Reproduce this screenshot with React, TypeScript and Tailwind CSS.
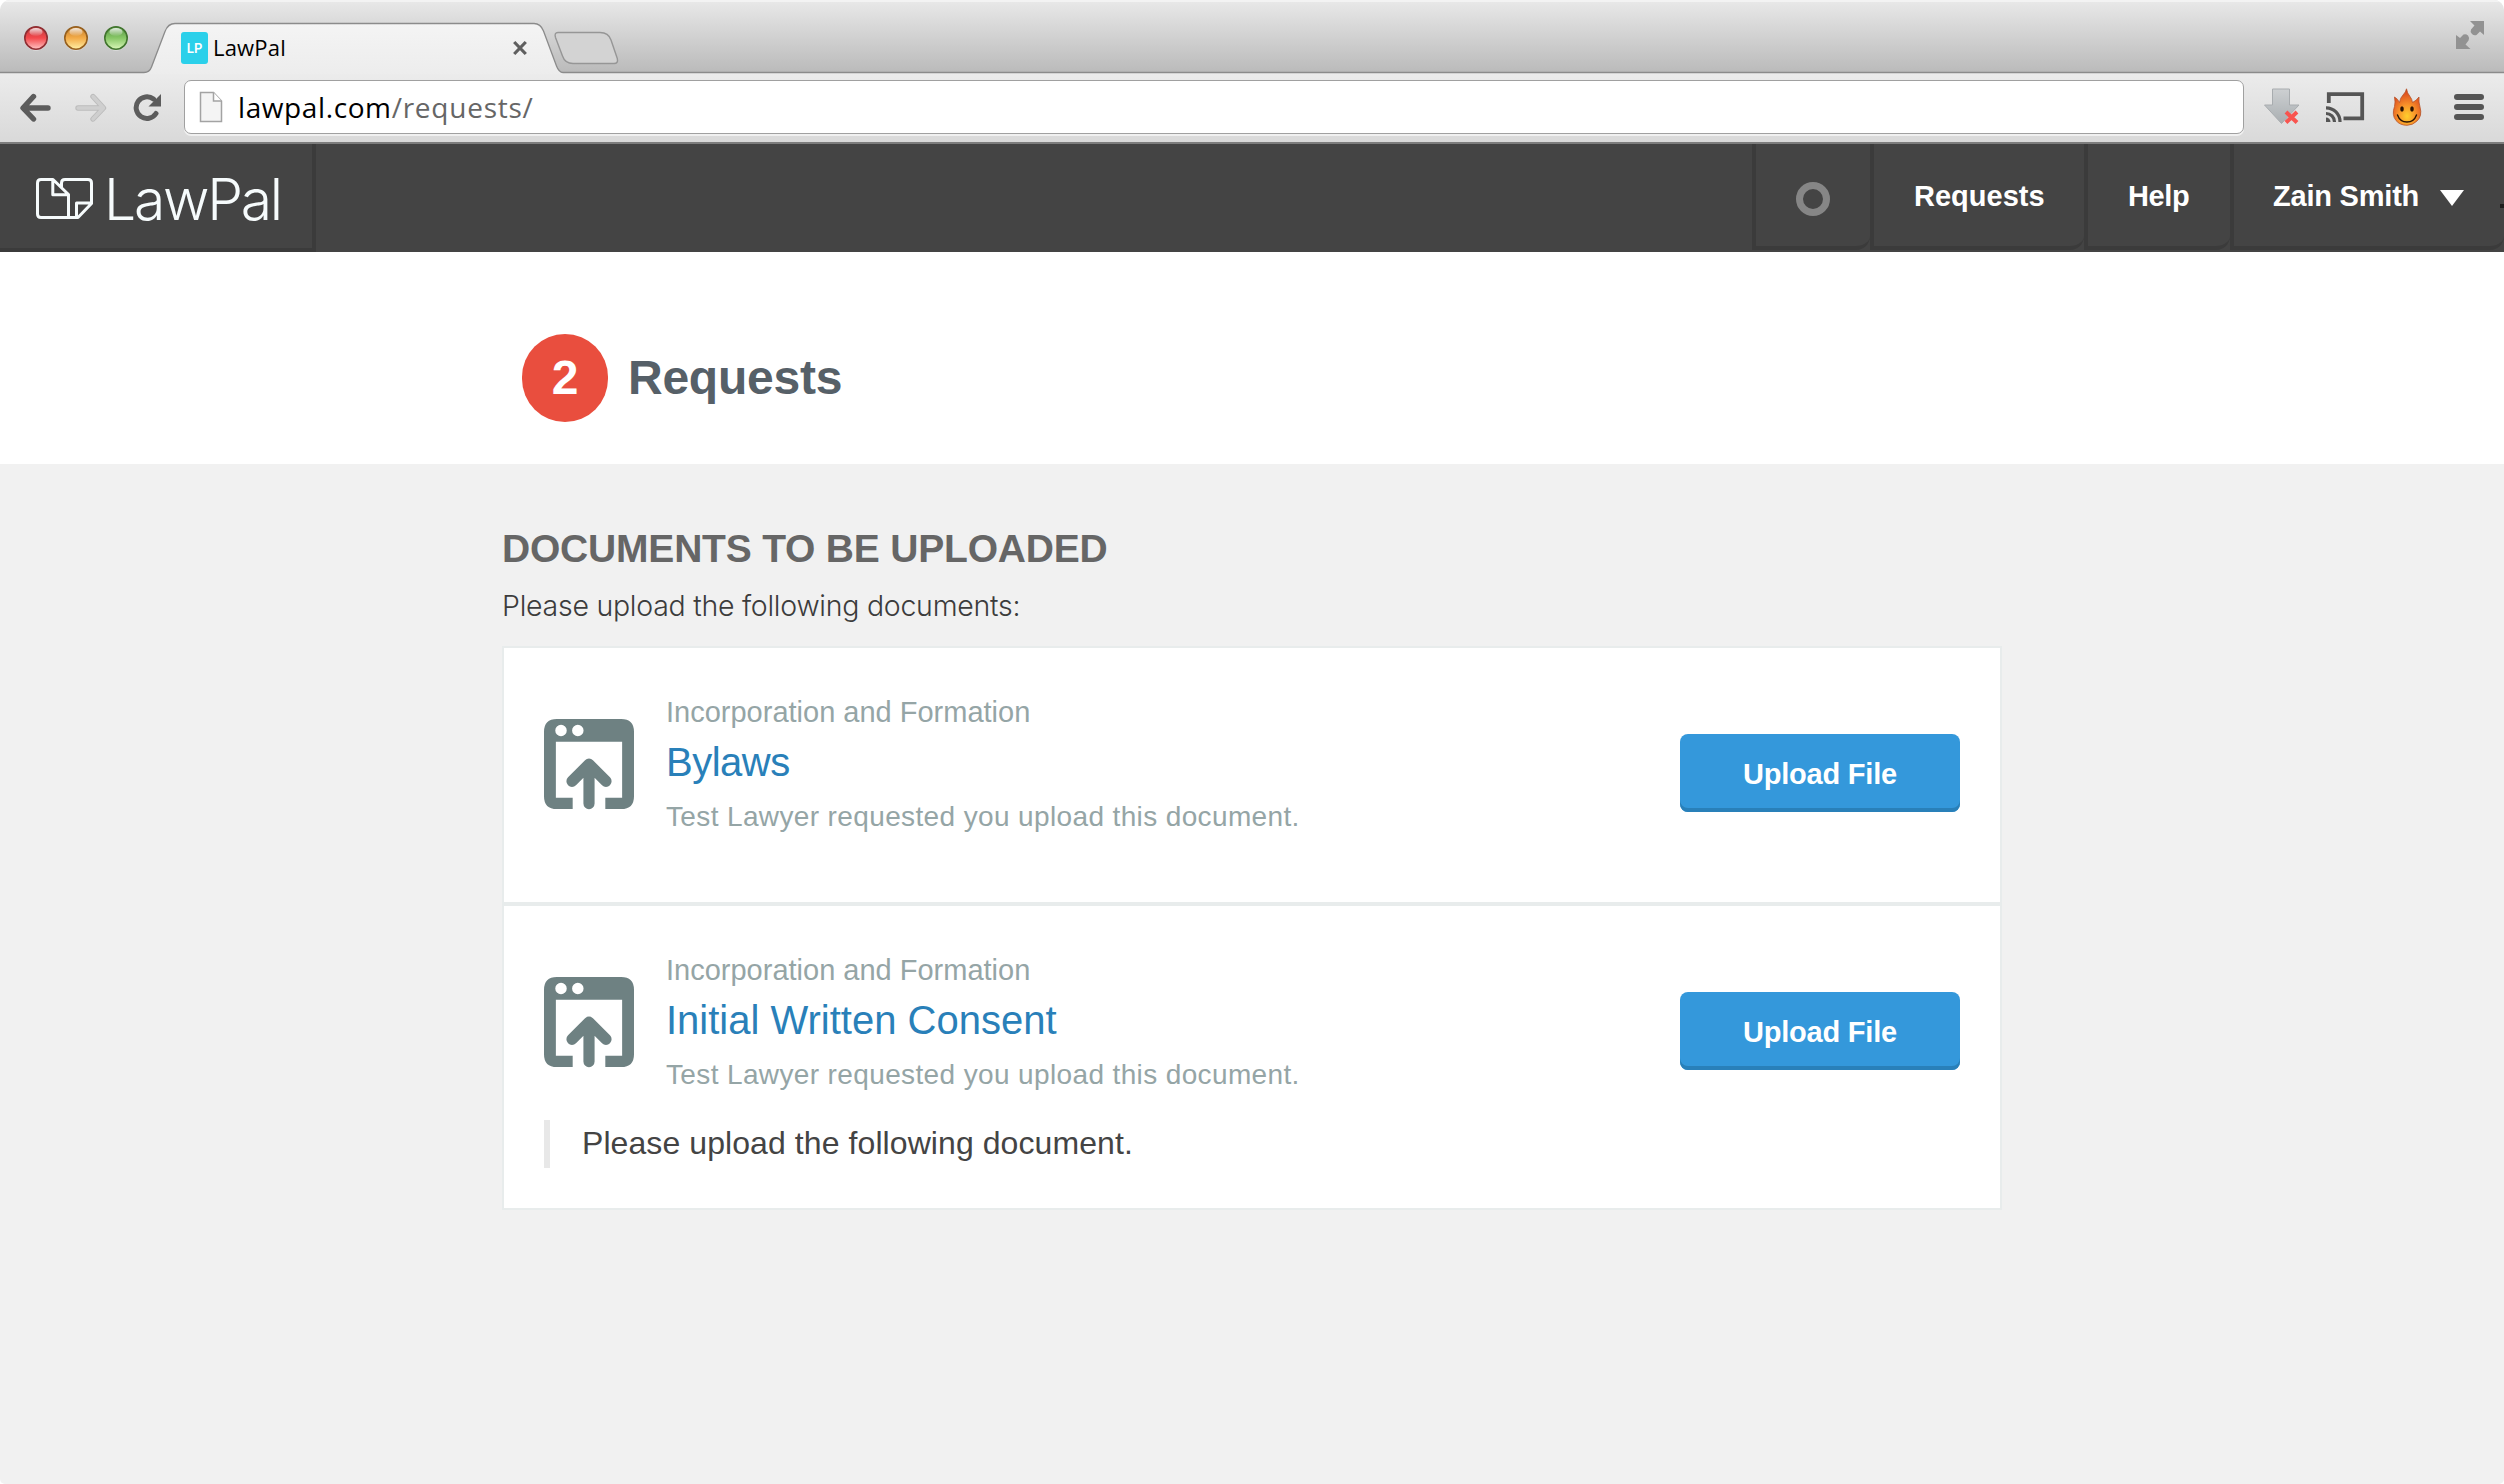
import React from 'react';

function TrafficLight({ id, edge, top, mid, glow }: { id: string; edge: string; top: string; mid: string; glow: string }) {
  return (
    <svg className="h-[26px] w-[26px]" viewBox="0 0 26 26">
      <defs>
        <linearGradient id={id} x1="0" y1="0" x2="0" y2="1">
          <stop offset="0" stopColor={top} />
          <stop offset="0.5" stopColor={mid} />
          <stop offset="1" stopColor={glow} />
        </linearGradient>
        <linearGradient id={id + '-shine'} x1="0" y1="0" x2="0" y2="1">
          <stop offset="0" stopColor="#fff" stopOpacity="0.85" />
          <stop offset="1" stopColor="#fff" stopOpacity="0.05" />
        </linearGradient>
      </defs>
      <circle cx="13" cy="14" r="11.8" fill="#fff" opacity="0.45" />
      <circle cx="13" cy="13" r="11.2" fill={`url(#${id})`} stroke={edge} strokeWidth="1.6" />
      <ellipse cx="13" cy="7" rx="6.6" ry="4" fill={`url(#${id}-shine)`} />
    </svg>
  );
}

function TabStrip() {
  return (
    <div className="relative flex h-[73px] items-start bg-linear-to-b from-[#e9e9e9] to-[#bababa] shadow-[inset_0_2px_0_#f3f3f3]">
      <svg className="absolute top-0 left-0 h-[74px] w-[2504px]" viewBox="0 0 2504 74">
        <defs>
          <linearGradient id="tab" x1="0" y1="0" x2="0" y2="1">
            <stop offset="0" stopColor="#f4f4f4" />
            <stop offset="1" stopColor="#ececec" />
          </linearGradient>
        </defs>
        <path
          d="M-2 78V72.500H144Q149.500 72.500 151.500 67L165 31.500Q168 23.500 175 23.500H534Q540.500 23.500 543.500 31L556.500 66Q559 72.500 563 72.500H2506V78Z"
          fill="url(#tab)"
          stroke="#8b8b8b"
          strokeWidth="1.3"
        />
        <path
          d="M558 32.500H600Q608.500 32.500 611 40L617.300 58.500Q618.500 63.500 614 63.500H573Q565 63.500 562.500 56L555.500 37.500Q554 32.500 558 32.500Z"
          fill="#d3d3d3"
          stroke="#969696"
          strokeWidth="1.4"
        />
      </svg>
      <div className="relative flex w-[181px] gap-[14px] pt-[25px] pl-[23px]">
        <TrafficLight id="close" edge="#8f2f33" top="#b9373b" mid="#f4494c" glow="#ffc3c3" />
        <TrafficLight id="minimize" edge="#96601f" top="#c07a2a" mid="#f3ab47" glow="#fff0a5" />
        <TrafficLight id="zoom" edge="#42752f" top="#549342" mid="#87c766" glow="#d9f7b8" />
      </div>
      <div className="relative flex w-[347px] items-start">
        <div className="mt-[32px] flex h-[32px] w-[27px] items-center justify-center rounded-[3px] bg-[#2bd0ea] pt-[1px] font-['Inter'] text-[13px] leading-none font-semibold text-white">
          LP
        </div>
        <div className="mt-[31px] ml-[5px] font-['Open_Sans',sans-serif] text-[22px] leading-[32px] tracking-[0.2px] text-black">LawPal</div>
        <svg className="mt-[40px] ml-auto h-[16px] w-[16px]" viewBox="0 0 16 16">
          <path d="M2.200 2L13.800 14M13.800 2L2.200 14" stroke="#5f5f5f" strokeWidth="3.2" />
        </svg>
      </div>
      <svg className="relative mt-[21px] mr-[20px] ml-auto h-[29px] w-[28px]" viewBox="0 0 28 29">
        <path
          d="M14 0H28V14L24 10.500L20.500 14Q18 15 16 13Q13.800 11 15 8.500L18.500 4.500Z M0 14L4 17L7.500 13.500Q10 12.500 12 14.500Q14 17 12.500 19.500L9.500 23.500L14.500 28H0Z"
          fill="#929292"
        />
      </svg>
    </div>
  );
}

function Toolbar() {
  return (
    <div className="flex h-[71px] items-start border-b-2 border-[#7d7d7d] bg-linear-to-b from-[#ececec] to-[#d9d9d9]">
      <div className="flex w-[184px] pt-[20px]">
        <svg className="ml-[20px] h-[30px] w-[32px]" viewBox="0 0 32 30">
          <path d="M13.500 3.500L3 15L13.500 26M3.500 15H28" fill="none" stroke="#5c5c5c" strokeWidth="5.4" strokeLinecap="round" strokeLinejoin="round" />
        </svg>
        <svg className="ml-[23px] h-[30px] w-[32px]" viewBox="0 0 32 30">
          <path d="M18 3.500L28.500 15L18 26M28 15H3" fill="none" stroke="#bcbcbc" strokeWidth="5.400" strokeLinecap="round" strokeLinejoin="round" />
          <path d="M18 3.500L28.500 15L18 26M28 15H3" fill="none" stroke="#cfcfcf" strokeWidth="3.400" strokeLinecap="round" strokeLinejoin="round" />
        </svg>
        <svg className="ml-[26px] h-[30px] w-[29px]" viewBox="0 0 29 30">
          <path d="M23 20.500A10.800 10.800 0 1 1 20.500 6" fill="none" stroke="#5c5c5c" strokeWidth="5" strokeLinecap="round" />
          <path d="M28 1V13.500H15.500Z" fill="#5c5c5c" />
        </svg>
      </div>
      <div className="mt-[7px] flex h-[54px] w-[2060px] rounded-[7px] border-[1.500px] border-[#a0a0a0] bg-white shadow-[0_2px_0_#f0f0f0]">
        <svg className="mt-[10px] ml-[14px] h-[32px] w-[24px]" viewBox="0 0 24 32">
          <path d="M1.500 1.500H14.500L22.500 10V30.500H1.500Z" fill="#f4f4f4" stroke="#a3a3a3" strokeWidth="1.500" />
          <path d="M14.500 1.500V10H22.500" fill="#fff" stroke="#a3a3a3" strokeWidth="1.500" />
        </svg>
        <div className="mt-[2px] ml-[15px] font-['Open_Sans',sans-serif] text-[28px] leading-[48px] tracking-[0.760px] text-[#666]">
          <span className="tracking-[0.600px] text-black">lawpal.com</span>/requests/
        </div>
      </div>
      <svg className="mt-[15px] ml-[20px] h-[37px] w-[36px]" viewBox="0 0 36 37">
        <defs>
          <linearGradient id="download" x1="0" y1="0" x2="0" y2="1">
            <stop offset="0" stopColor="#cdd0d2" />
            <stop offset="1" stopColor="#a9aeb1" />
          </linearGradient>
        </defs>
        <path d="M8.500 1H25.500V17H35L17.500 35.500L0.500 17H8.500Z" fill="url(#download)" stroke="#a8acaf" strokeWidth="1" />
        <path d="M22 24L33 34.500M33 24L22 34.500" stroke="#f8544f" strokeWidth="4" />
      </svg>
      <svg className="mt-[19px] ml-[26px] h-[31px] w-[39px]" viewBox="0 0 39 31">
        <path d="M2.800 11V2.200H36.200V26.300H17.500" fill="none" stroke="#555" strokeWidth="3.800" />
        <path d="M0 15.800A14 14 0 0 1 14 30M0 21.500A8.500 8.500 0 0 1 8.500 30" fill="none" stroke="#555" strokeWidth="3.200" />
        <path d="M0 25.500A4.500 4.500 0 0 1 4.500 30H0Z" fill="#555" />
      </svg>
      <svg className="mt-[15px] ml-[27px] h-[38px] w-[30px]" viewBox="0 0 30 38">
        <defs>
          <radialGradient id="flame" cx="0.5" cy="0.75" r="0.7">
            <stop offset="0" stopColor="#ffcf2c" />
            <stop offset="0.450" stopColor="#f8922a" />
            <stop offset="1" stopColor="#d9431d" />
          </radialGradient>
        </defs>
        <path
          d="M14.500 0.800Q15 5 18 8.500Q20 11 20.500 14.500Q24 13 27 9Q26.500 14 28 19Q30.500 28 25 33Q20.500 37.300 15 37.300Q8 37.300 4 32.500Q-0.500 27 2.500 18.500Q3.500 14 2.500 9Q6 11 7.500 14.500Q8 10 11 7Q14 4 14.500 0.800Z"
          fill="url(#flame)"
          stroke="#b5532a"
          strokeWidth="0.8"
        />
        <ellipse cx="10" cy="21" rx="1.800" ry="2.700" fill="#2b1405" />
        <ellipse cx="20" cy="21" rx="1.800" ry="2.700" fill="#2b1405" />
        <path d="M5.500 27Q8 34 15 34Q22 34 24.500 27" fill="none" stroke="#2b1405" strokeWidth="1.400" strokeLinecap="round" />
      </svg>
      <div className="mt-[21px] ml-[32px] flex w-[30px] flex-col gap-[4px]">
        <div className="h-[6px] rounded-full bg-[#555]" />
        <div className="h-[6px] rounded-full bg-[#555]" />
        <div className="h-[6px] rounded-full bg-[#555]" />
      </div>
    </div>
  );
}

function SiteHeader() {
  return (
    <header className="relative flex h-[108px] bg-[#444] text-[29px] leading-[36px] font-bold text-white">
      <div className="flex w-[316px] border-r-4 border-b-4 border-[#3b3b3b] pt-[34px] pl-[36px]">
        <svg className="h-[42px] w-[58px]" viewBox="0 0 58 42" fill="none" stroke="#f6fbfc" strokeWidth="3" strokeLinejoin="round">
          <path d="M17 1.500H5Q1.500 1.500 1.500 5V36Q1.500 39.500 5 39.500H32.500V16.500ZM16.800 2V16.800H32" />
          <path d="M25.500 9V5Q25.500 1.500 29 1.500H52Q55.500 1.500 55.500 5V25.500L42 39.500H32M55 25H40.500V39" />
        </svg>
        <div className="-mt-[6px] ml-[10px] font-['Inter'] text-[57px] leading-[56px] font-[270] tracking-[-2.250px] text-[#f6fbfc]">LawPal</div>
      </div>
      <nav className="ml-auto flex h-[106px]">
        <div className="flex w-[118px] justify-center rounded-br-[14px] border-b-4 border-l-4 border-[#3b3b3b] pt-[38px]">
          <div className="h-[34px] w-[34px] rounded-full border-[7px] border-[#868686]" />
        </div>
        <a className="w-[214px] rounded-br-[14px] border-b-4 border-l-4 border-[#3b3b3b] pt-[34px] pl-[40px]">Requests</a>
        <a className="w-[146px] rounded-br-[14px] border-b-4 border-l-4 border-[#3b3b3b] pt-[34px] pl-[40px] tracking-[-0.370px]">Help</a>
        <a className="flex w-[274px] rounded-br-[14px] border-b-4 border-l-4 border-[#3b3b3b] pt-[34px] pl-[39px] tracking-[-0.210px]">
          <span className="w-[167px]">Zain Smith</span>
          <svg className="mt-[12px] h-[16px] w-[24px]" viewBox="0 0 24 16">
            <path d="M0 0H24L12 16Z" fill="#fff" />
          </svg>
        </a>
      </nav>
      <div className="absolute top-[60px] right-0 h-[4px] w-[4px] bg-[#1e1e1e]" />
    </header>
  );
}

function UploadIcon() {
  return (
    <svg className="mt-[71px] h-[91px] w-[90px] shrink-0" viewBox="0 0 91 92">
      <path
        fillRule="evenodd"
        fill="#6e8182"
        d="M13 0H78Q91 0 91 13V78Q91 91 78 91H62V79.500H79V23H12V79.500H29V91H13Q0 91 0 78V13Q0 0 13 0ZM17.200 5.800A5.800 5.800 0 1 0 17.200 17.400A5.800 5.800 0 1 0 17.200 5.800ZM34.200 5.800A5.800 5.800 0 1 0 34.200 17.400A5.800 5.800 0 1 0 34.200 5.800Z"
      />
      <path d="M45.500 48V85.500M28.300 63L45.500 45.700L62.700 63" fill="none" stroke="#6e8182" strokeWidth="11.300" strokeLinecap="round" strokeLinejoin="round" />
    </svg>
  );
}

function RequestRow({ title, note, titleClass }: { title: string; note?: string; titleClass: string }) {
  return (
    <div className={note ? 'h-[302px] px-[40px]' : 'h-[258px] px-[40px]'}>
      <div className="flex h-[186px] items-start">
        <UploadIcon />
        <div className="ml-[32px] pt-[46px]">
          <div className="text-[29px] leading-[36px] text-[#95a5a6]">Incorporation and Formation</div>
          <div className={titleClass}>{title}</div>
          <div className="mt-[13px] text-[28px] leading-[36px] tracking-[0.370px] text-[#95a5a6]">Test Lawyer requested you upload this document.</div>
        </div>
        <button className="mt-[86px] ml-auto h-[78px] w-[280px] rounded-[8px] bg-[#3498db] pt-[2px] text-[29px] leading-[76px] font-bold tracking-[-0.220px] text-white shadow-[inset_0_-4px_0_#2980b9]">
          Upload File
        </button>
      </div>
      {note && (
        <div className="mt-[28px] h-[48px] border-l-[6px] border-[#e8e8e8] pl-[32px] text-[32px] leading-[46px] tracking-[0.080px] text-[#444]">{note}</div>
      )}
    </div>
  );
}

export default function App() {
  return (
    <div className="bg-white">
      <div className="flex h-[1484px] w-[2504px] flex-col overflow-hidden rounded-t-[10px] rounded-b-[5px] bg-[#f1f1f1] font-['Liberation_Sans',sans-serif]">
        <TabStrip />
        <Toolbar />
        <SiteHeader />
        <div className="h-[212px] bg-white">
          <div className="mx-auto flex w-[1500px] pt-[82px] pl-[20px] text-[48px] leading-[88px] font-bold">
            <div className="h-[88px] w-[86px] rounded-full bg-[#e94e3e] text-center text-white">2</div>
            <h1 className="ml-[20px] tracking-[-0.250px] text-[#566068]">Requests</h1>
          </div>
        </div>
        <main className="mx-auto w-[1500px] pt-[61px]">
          <h2 className="text-[39px] leading-[48px] font-bold tracking-[-0.200px] text-[#666]">DOCUMENTS TO BE UPLOADED</h2>
          <p className="mt-[15px] font-['Inter'] text-[28.500px] leading-[36px] font-light tracking-[-0.260px] text-[#3c3c3c]">Please upload the following documents:</p>
          <div className="mt-[22px] divide-y-4 divide-[#e8ecec] border-2 border-[#e8ecec] bg-white">
            <RequestRow title="Bylaws" titleClass="mt-[8px] text-[40px] leading-[48px] tracking-[-0.500px] text-[#2980b9]" />
            <RequestRow
              title="Initial Written Consent"
              titleClass="mt-[8px] text-[40px] leading-[48px] text-[#2980b9]"
              note="Please upload the following document."
            />
          </div>
        </main>
      </div>
    </div>
  );
}
